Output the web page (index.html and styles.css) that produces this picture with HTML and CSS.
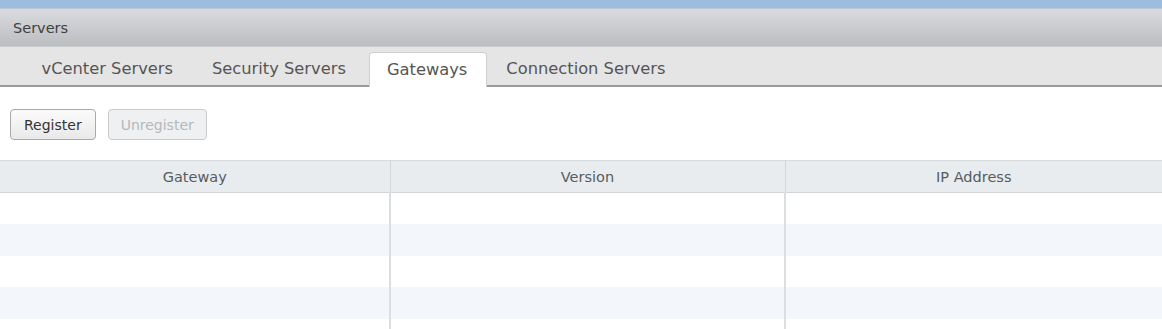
FILE: index.html
```html
<!DOCTYPE html>
<html lang="en">
<head>
  <meta charset="UTF-8" />
  <title>Servers</title>
  <link rel="stylesheet" href="styles.css">
</head>
<body>
  <div class="top-strip"></div>
  <div class="title-bar">Servers</div>
  <div class="tab-bar">
    <div class="tab">vCenter Servers</div>
    <div class="tab">Security Servers</div>
    <div class="tab active">Gateways</div>
    <div class="tab">Connection Servers</div>
  </div>
  <div class="toolbar">
    <button class="btn">Register</button>
    <button class="btn" disabled>Unregister</button>
  </div>
  <div class="grid-wrap">
    <table class="grid">
      <thead>
        <tr>
          <th class="col-gw">Gateway</th>
          <th class="col-ver">Version</th>
          <th>IP Address</th>
        </tr>
      </thead>
      <tbody>
        <tr><td></td><td></td><td></td></tr>
        <tr><td></td><td></td><td></td></tr>
        <tr><td></td><td></td><td></td></tr>
        <tr><td></td><td></td><td></td></tr>
        <tr><td></td><td></td><td></td></tr>
      </tbody>
    </table>
  </div>
</body>
</html>
```
FILE: styles.css
```css
* { box-sizing: border-box; }
html, body {
  height: 100%;
}
body {
  margin: 0;
  font-family: 'DejaVu Sans', Verdana, sans-serif;
  color: #444;
  background: #fff;
  overflow: hidden;
  display: flex;
  flex-direction: column;
}
.top-strip {
  height: 9px;
  background: #9cbddd;
  border-bottom: 1px solid #b9c6d3;
}
.title-bar {
  height: 38px;
  padding-left: 13px;
  display: flex;
  align-items: center;
  font-size: 14.5px;
  color: #404040;
  background: linear-gradient(#dadbde, #bcbdc0);
  border-bottom: 1px solid #c9cacc;
}
.tab-bar {
  height: 40px;
  flex-shrink: 0;
  display: flex;
  align-items: flex-end;
  padding-left: 22px;
  background: #e5e5e5;
  border-bottom: 2px solid #9a9a9a;
}
.tab {
  height: 33px;
  padding: 0 19.5px;
  display: flex;
  align-items: center;
  font-size: 16.3px;
  color: #555;
}
.tab.active {
  background: #fff;
  border: 1px solid #cfcfcf;
  border-bottom: none;
  border-radius: 4px 4px 0 0;
  height: 35px;
  margin: 0 0 -2px 4px;
  padding: 0 18.5px 2px 16.5px;
}
.toolbar {
  display: flex;
  gap: 12px;
  padding: 22px 10px 20px;
}
.btn {
  height: 31px;
  padding: 0 13px;
  font-family: 'DejaVu Sans', Verdana, sans-serif;
  font-size: 14px;
  color: #333;
  background: linear-gradient(#fbfbfb, #e9e9e9);
  border: 1px solid #a9a9a9;
  border-radius: 4px;
}
.btn:disabled {
  padding: 0 12px;
  color: #b5b8bb;
  background: #eef0f1;
  border-color: #c9cbcd;
}
.grid-wrap {
  flex: 1;
  overflow: hidden;
}
.grid {
  width: 100%;
  border-collapse: collapse;
  table-layout: fixed;
}
.grid th {
  height: 32px;
  font-weight: normal;
  font-size: 14.5px;
  color: #555c60;
  background: #e9ecef;
  border-top: 1px solid #d8dbde;
  border-bottom: 1px solid #d3d6d9;
  border-right: 1px solid #d3d6d9;
}
.grid th:last-child,
.grid td:last-child { border-right: none; }
.col-gw { width: 390px; }
.col-ver { width: 395px; }
.grid td {
  height: 31.5px;
  border-right: 2px solid #dcdfe2;
  padding: 0;
}
.grid tbody tr:nth-child(even) td { background: #f3f6fa; }
```
